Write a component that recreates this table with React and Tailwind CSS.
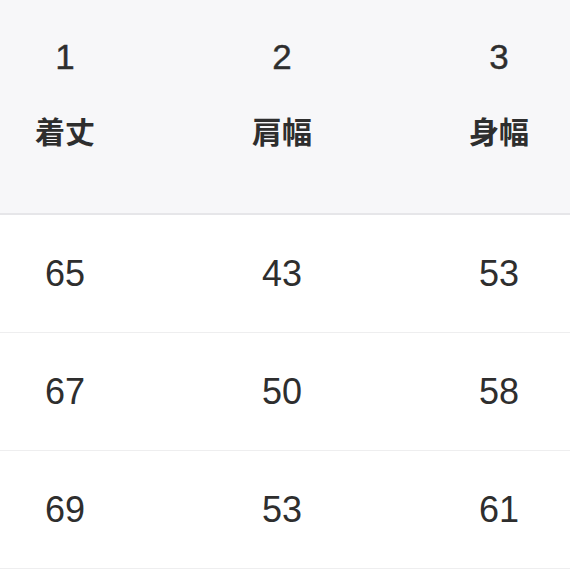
const headers = [
  { no: "1", label: "着丈" },
  { no: "2", label: "肩幅" },
  { no: "3", label: "身幅" },
];

const rows = [
  ["65", "43", "53"],
  ["67", "50", "58"],
  ["69", "53", "61"],
];

const cols = "grid grid-cols-[130px_304px_130px]";

const App = () => {
  return (
    <div
      className="w-[570px] h-[570px] overflow-hidden bg-white text-[#2e2e2e]"
      style={{ fontFamily: '"Liberation Sans", "Noto Sans CJK JP", sans-serif' }}
    >
      <div className={`${cols} h-[215px] bg-[#f7f7f9] border-b-2 border-[#e6e6e9]`}>
        {headers.map((h) => (
          <div key={h.no} className="flex flex-col items-center pt-[36px]">
            <div className="text-[35px] leading-[42px] [-webkit-text-stroke:0.4px_#2e2e2e]">
              {h.no}
            </div>
            <div className="mt-[37px] text-[30px] leading-[36px] font-bold">
              {h.label}
            </div>
          </div>
        ))}
      </div>
      {rows.map((r, i) => (
        <div
          key={i}
          className={`${cols} h-[118px] border-b border-[#eeeeef] items-center`}
        >
          {r.map((v, j) => (
            <div key={j} className="text-center text-[36px] leading-none">
              {v}
            </div>
          ))}
        </div>
      ))}
    </div>
  );
};

export default App;
